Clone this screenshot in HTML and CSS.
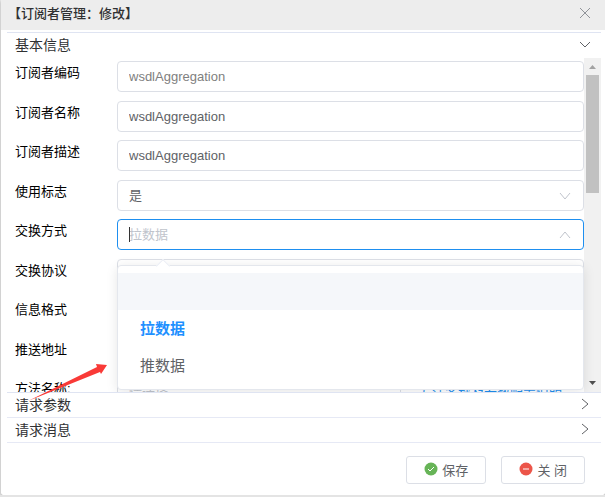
FILE: index.html
```
<!DOCTYPE html>
<html lang="zh-CN">
<head>
    <meta charset="UTF-8">
    <meta name="viewport" content="width=device-width, initial-scale=1.0">
    <title>订阅者管理</title>
    <link rel="stylesheet" href="styles.css">
</head>
<body>
    <div class="dialog">
        <header class="dialog-header">
            <h1>【订阅者管理：修改】</h1>
            <button class="close" type="button" aria-label="关闭窗口">
                <svg width="12" height="12" viewBox="0 0 12 12"><path d="M1 1l10 10M11 1L1 11"/></svg>
            </button>
        </header>

        <div class="collapse">
            <button class="collapse-title" type="button" aria-expanded="true">
                基本信息
                <svg width="12" height="12" viewBox="0 0 12 12"><path d="M1 4l5 5 5-5"/></svg>
            </button>
            <div class="scroll">
                <form class="fields" id="subscriber">
                    <div class="row">
                        <label for="code">订阅者编码</label>
                        <input class="control" type="text" id="code" value="wsdlAggregation" disabled>
                    </div>
                    <div class="row">
                        <label for="name">订阅者名称</label>
                        <input class="control" type="text" id="name" value="wsdlAggregation">
                    </div>
                    <div class="row">
                        <label for="desc">订阅者描述</label>
                        <input class="control" type="text" id="desc" value="wsdlAggregation">
                    </div>
                    <div class="row">
                        <label for="flag">使用标志</label>
                        <div class="select">
                            <select class="control" id="flag"><option>是</option><option>否</option></select>
                            <svg width="12" height="12" viewBox="0 0 12 12"><path d="M1 3l5 6 5-6"/></svg>
                        </div>
                    </div>
                    <div class="row">
                        <label for="mode">交换方式</label>
                        <div class="select open">
                            <input class="control" type="text" id="mode" placeholder="拉数据" role="combobox" aria-expanded="true" aria-controls="mode-list">
                            <span class="caret"></span>
                            <svg width="12" height="12" viewBox="0 0 12 12"><path d="M1 9l5-6 5 6"/></svg>
                            <ul class="dropdown" id="mode-list" role="listbox">
                                <li class="hover" role="option" aria-label="空"></li>
                                <li class="selected" role="option" aria-selected="true">拉数据</li>
                                <li role="option">推数据</li>
                            </ul>
                        </div>
                    </div>
                    <div class="row">
                        <label for="protocol">交换协议</label>
                        <input class="control" type="text" id="protocol">
                    </div>
                    <div class="row">
                        <label for="format">信息格式</label>
                        <input class="control" type="text" id="format">
                    </div>
                    <div class="row">
                        <label for="address">推送地址</label>
                        <input class="control" type="text" id="address">
                    </div>
                    <div class="row">
                        <label for="method">方法名称:</label>
                        <input class="control" type="text" id="method" placeholder="请选择">
                        <a class="hint" href="#">方法名称及参数配置说明</a>
                    </div>
                </form>
                <div class="scrollbar">
                    <svg width="17" height="17" viewBox="0 0 17 17"><path fill="#a3a3a3" d="M5 11h7L8.500 7z"/></svg>
                    <div class="thumb"></div>
                    <svg width="17" height="17" viewBox="0 0 17 17"><path fill="#505050" d="M5 6h7l-3.500 4z"/></svg>
                </div>
            </div>
            <button class="collapse-title" type="button" aria-expanded="false">
                请求参数
                <svg width="12" height="12" viewBox="0 0 12 12"><path d="M3 1l6 5-6 5"/></svg>
            </button>
            <button class="collapse-title" type="button" aria-expanded="false">
                请求消息
                <svg width="12" height="12" viewBox="0 0 12 12"><path d="M3 1l6 5-6 5"/></svg>
            </button>
        </div>

        <footer class="dialog-footer">
            <button class="btn" type="submit" form="subscriber">
                <svg width="14" height="14" viewBox="0 0 14 14"><circle cx="7" cy="7" r="6.500" fill="#67b457"/><path d="M4 7l2 2 4-4"/></svg>
                保存
            </button>
            <button class="btn" type="button">
                <svg width="14" height="14" viewBox="0 0 14 14"><circle cx="7" cy="7" r="6.500" fill="#ec5549"/><path d="M4 7h6"/></svg>
                关 闭
            </button>
        </footer>

        <svg class="arrow" width="80" height="39" viewBox="0 0 80 39"><path fill="#f93a37" d="M0 38L69 4l-1-3 11 1-6 9-1-2z"/></svg>
    </div>
</body>
</html>
```
FILE: styles.css
```
* {
    box-sizing: border-box;
}
body {
    margin: 0;
    background: #e4e4e4;
    font-family: "Liberation Sans", "Noto Sans CJK SC", sans-serif;
    font-size: 13px;
    color: #000;
}
button, input, select {
    font-family: inherit;
    font-size: 13px;
}
.dialog {
    position: relative;
    margin-left: 1px;
    background: #fff;
    border-radius: 2px;
    box-shadow: 0 1px 2px rgba(0, 0, 0, 0.3);
}
.dialog-header {
    display: flex;
    align-items: center;
    justify-content: space-between;
    height: 30px;
    padding: 0 14px 5px 7px;
    background: #ededed;
}
.dialog-header h1 {
    margin: 0;
    font-size: 13px;
    font-weight: 500;
    color: #303133;
}
.close {
    display: flex;
    padding: 0;
    border: none;
    background: none;
}
.close svg {
    fill: none;
    stroke: #909399;
}

.collapse {
    margin: 2px 4px 0 6px;
    border-top: 1px solid #dfe4f2;
}
.collapse-title {
    display: flex;
    align-items: center;
    justify-content: space-between;
    width: 100%;
    height: 25px;
    padding: 0 10px 3px 8px;
    border: none;
    border-bottom: 1px solid #e6e9f5;
    background: none;
    font-size: 14px;
    color: #303133;
}
.collapse-title[aria-expanded="true"] {
    border-bottom: none;
}
.collapse-title svg {
    fill: none;
    stroke: #606266;
}
.scroll {
    display: flex;
    height: 335px;
    border-bottom: 1px solid #dfe4f2;
    overflow: hidden;
}
.fields {
    flex: 1;
    display: grid;
    grid-template-rows: repeat(9, 1fr);
    height: 359px;
    padding: 3px 0 0 8px;
    margin: 0;
}
.row {
    display: flex;
    align-items: flex-start;
}
.row label {
    width: 102px;
    line-height: 24px;
    flex: none;
}
.control {
    display: block;
    flex: 1;
    width: 100%;
    min-width: 0;
    height: 31px;
    padding: 0 11px;
    border: 1px solid #dcdfe6;
    border-radius: 4px;
    background: #fff;
    color: #606266;
    outline: none;
    appearance: none;
}
.control:disabled {
    color: #808080;
}
.control::placeholder {
    color: #c0c4cc;
}
.select {
    position: relative;
    flex: 1;
}
.select > svg {
    position: absolute;
    top: 10px;
    right: 13px;
    fill: none;
    stroke: #c0c4cc;
}
.open .control {
    border-color: #1e8ff0;
}
.caret {
    position: absolute;
    top: 8px;
    left: 12px;
    width: 1px;
    height: 15px;
    background: #333;
}
.hint {
    padding: 0 22px 0 18px;
    line-height: 31px;
    color: #1e8ff0;
    text-decoration: none;
}

.dropdown {
    position: absolute;
    z-index: 2;
    top: 46px;
    left: 0;
    right: 0;
    margin: 0;
    padding: 7px 0 5px;
    border: 1px solid #e4e7ed;
    border-radius: 4px;
    background: #fff;
    box-shadow: 0 2px 12px rgba(0, 0, 0, 0.1);
    list-style: none;
}
.dropdown::before {
    content: "";
    position: absolute;
    top: -5px;
    left: 40px;
    width: 9px;
    height: 9px;
    border: 1px solid #ebeef5;
    border-right: none;
    border-bottom: none;
    background: #fff;
    transform: rotate(45deg);
}
.dropdown li {
    height: 37px;
    padding: 0 22px;
    line-height: 38px;
    font-size: 15px;
    color: #606266;
}
.dropdown .hover {
    background: #f5f7fa;
}
.dropdown .selected {
    font-weight: bold;
    color: #1e90ff;
}

.scrollbar {
    display: flex;
    flex-direction: column;
    width: 17px;
    background: #f1f1f1;
}
.thumb {
    height: 118px;
    margin: 0 2px auto;
    background: #c1c1c1;
}

.dialog-footer {
    display: flex;
    justify-content: flex-end;
    gap: 15px;
    padding: 13px 20px 11px;
}
.btn {
    display: flex;
    align-items: center;
    justify-content: center;
    gap: 4px;
    height: 28px;
    padding: 0 17px 2px;
    border: 1px solid #dcdfe6;
    border-radius: 3px;
    background: #fff;
    color: #606266;
}
.btn path {
    fill: none;
    stroke: #fff;
}
.arrow {
    position: absolute;
    z-index: 3;
    left: 27px;
    top: 363px;
}
```
